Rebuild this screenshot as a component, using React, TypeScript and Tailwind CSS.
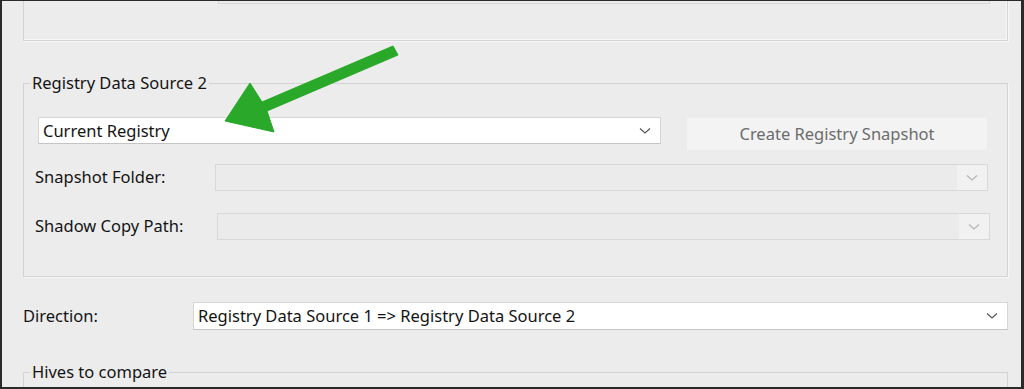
import React from 'react';

const font = { fontFamily: '"Noto Sans", "Open Sans", sans-serif' };

function Chevron({ disabled }: { disabled?: boolean }) {
  return (
    <svg width="12" height="8" viewBox="0 0 12 8" className="shrink-0">
      <polyline
        points="1,1.5 6,6 11,1.5"
        fill="none"
        stroke={disabled ? '#b4b4b4' : '#555555'}
        strokeWidth="1.2"
      />
    </svg>
  );
}

function Combo({ text, className }: { text: string; className: string }) {
  return (
    <div className={`flex items-center bg-white border border-[#d6d6d6] border-b-[#c4c4c4] ${className}`}>
      <span className="flex-1 pl-[4px] text-[16.5px] text-[#141414] leading-[22px] whitespace-nowrap overflow-hidden">{text}</span>
      <div className="w-[30px] flex justify-center">
        <Chevron />
      </div>
    </div>
  );
}

function DisabledCombo({ className }: { className: string }) {
  return (
    <div className={`flex bg-[#ebebeb] border border-[#d8d8d8] ${className}`}>
      <div className="flex-1" />
      <div className="w-[30px] bg-[#f1f1f1] flex items-center justify-center">
        <Chevron disabled />
      </div>
    </div>
  );
}

export default function App() {
  return (
    <div
      className="relative w-[1024px] h-[389px] overflow-hidden bg-[#ececec] border-t border-l-2 border-r-[3px] border-b-2 border-[#2a2a2a]"
      style={font}
    >
      <div className="ml-[21px] mr-[13px]">
        {/* previous group, scrolled off the top */}
        <div className="h-[40px] border-x border-b border-[#d3d3d3] shadow-[inset_-1px_-1px_0_#f7f7f7,1px_1px_0_#f7f7f7] overflow-hidden">
          <div className="flex items-center -mt-[24px] h-[27px] pl-[11px]">
            <span className="w-[183px] text-[16.5px] leading-[22px] text-[#141414] whitespace-nowrap">Shadow Copy Path:</span>
            <div className="w-[772px] h-[27px] bg-[#ebebeb] border border-[#d8d8d8]" />
          </div>
        </div>

        {/* Registry Data Source 2 */}
        <fieldset className="mt-[31px] h-[205px] border border-[#d3d3d3] shadow-[1px_1px_0_#f7f7f7] px-0">
          <legend className="ml-[6px] px-[2px] text-[16.5px] leading-[22px] text-[#141414]">Registry Data Source 2</legend>
          <div className="flex items-start mt-[23px] pl-[14px]">
            <Combo text="Current Registry" className="w-[623px] h-[27px]" />
            <button className="ml-[26px] w-[300px] h-[32px] mt-[1px] bg-[#f3f3f3] text-[16.5px] text-[#6c6c6c]">
              Create Registry Snapshot
            </button>
          </div>
          <div className="flex items-center mt-[14px] pl-[11px]">
            <span className="w-[180px] text-[16.5px] text-[#141414]">Snapshot Folder:</span>
            <DisabledCombo className="w-[773px] h-[27px]" />
          </div>
          <div className="flex items-center mt-[22px] pl-[11px]">
            <span className="w-[182px] text-[16.5px] text-[#141414]">Shadow Copy Path:</span>
            <DisabledCombo className="w-[773px] h-[27px]" />
          </div>
        </fieldset>

        {/* Direction */}
        <div className="flex items-center mt-[25px]">
          <span className="w-[170px] text-[16.5px] text-[#141414]">Direction:</span>
          <Combo text="Registry Data Source 1 => Registry Data Source 2" className="flex-1 h-[28px]" />
        </div>

        {/* Hives to compare */}
        <fieldset className="mt-[31px] h-[60px] border border-[#d3d3d3] px-0">
          <legend className="ml-[6px] px-[2px] text-[16.5px] leading-[22px] text-[#141414]">Hives to compare</legend>
        </fieldset>
      </div>

      {/* annotation arrow */}
      <svg className="absolute left-0 top-0 pointer-events-none" width="1024" height="389">
        <polygon
          points="391,45 396,54 265,110 272,131 223,120 248,82 260,101"
          fill="#29a829"
          stroke="#29a829"
          strokeWidth="1"
          strokeLinejoin="round"
        />
      </svg>
    </div>
  );
}
